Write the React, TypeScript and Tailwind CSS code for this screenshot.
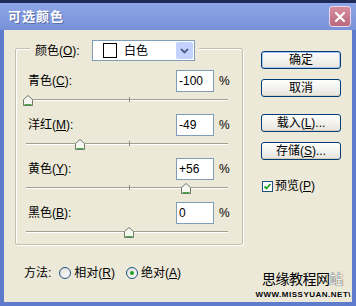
import { useState } from "react";

type Row = { label: string; key: string; value: string; thumb: number };

const rows: Row[] = [
  { label: "青色(", key: "C", value: "-100", thumb: 28 },
  { label: "洋红(", key: "M", value: "-49", thumb: 80 },
  { label: "黄色(", key: "Y", value: "+56", thumb: 186 },
  { label: "黑色(", key: "B", value: "0", thumb: 129 },
];

const font = "font-['Liberation_Sans','Noto_Sans_CJK_SC',sans-serif]";

function Thumb({ left }: { left: number }) {
  return (
    <svg
      width="10"
      height="11"
      viewBox="0 0 10 11"
      className="absolute top-[3px]"
      style={{ left: left - 5 }}
    >
      <polygon
        points="0.5,4.5 5,0.5 9.5,4.5 9.5,10.5 0.5,10.5"
        fill="#f7f7f2"
        stroke="#6f7a6c"
      />
      <line x1="1.5" y1="9.5" x2="8.5" y2="9.5" stroke="#3fae3f" />
    </svg>
  );
}

function Slider({ thumb }: { thumb: number }) {
  // track spans x 26..228 on the page; group content starts at x 16
  return (
    <div className="relative h-[22px]">
      <div className="absolute left-[10px] top-[7px] w-[202px] h-[1px] bg-[#a29f91]" />
      <div className="absolute left-[10px] top-[8px] w-[202px] h-[1px] bg-white" />
      <div className="absolute left-[113px] top-[5px] w-[1px] h-[5px] bg-[#8c897c]" />
      <Thumb left={thumb - 16} />
    </div>
  );
}

function XpButton({ children, main }: { children: React.ReactNode; main?: boolean }) {
  return (
    <button
      className={
        "w-[80px] h-[18px] rounded-[3px] border border-[#003c74] bg-gradient-to-b from-white to-[#e6e4dc] text-[12px] leading-none text-black flex items-center justify-center " +
        (main ? "shadow-[inset_0_0_0_1px_#a9c4f2]" : "shadow-[inset_0_-1px_0_#d6d0c0]")
      }
    >
      {children}
    </button>
  );
}

function Radio({ checked }: { checked?: boolean }) {
  return (
    <span className="w-[12px] h-[12px] rounded-full border border-[#1c5180] bg-gradient-to-br from-[#dcdcd6] to-white flex items-center justify-center">
      {checked && <span className="w-[4px] h-[4px] rounded-full bg-[#21a121]" />}
    </span>
  );
}

export default function App() {
  const [preview, setPreview] = useState(true);

  return (
    <div className={`relative w-[356px] h-[306px] flex flex-col overflow-hidden bg-[#5f7bcb] ${font}`}>
      <div className="h-[3px] bg-[#1f2b58]" />
      <div className="h-[27px] flex items-center justify-between pl-[8px] pr-[5px] bg-gradient-to-b from-[#8ea6e6] to-[#7891da]">
        <span className="text-[13px] font-bold text-white tracking-[1px] [text-shadow:1px_1px_0_#5a6fa8]">
          可选颜色
        </span>
        <span className="w-[22px] h-[21px] rounded-[3px] border border-[#e9d8e6] bg-gradient-to-b from-[#d88c9c] to-[#b86a82] flex items-center justify-center">
          <svg width="12" height="12" viewBox="0 0 12 12">
            <path d="M2 2 L10 10 M10 2 L2 10" stroke="white" strokeWidth="2.2" strokeLinecap="round" />
          </svg>
        </span>
      </div>

      <div className="flex-1 px-[4px] pb-[4px]">
        <div className="h-full bg-[#ece9d8] flex flex-col text-[12px] text-black">
          <div className="flex items-start pl-[11px] pt-[18px]">
            <div className="w-[228px] h-[197px] rounded-[2px] border border-[#c3c0b1] shadow-[inset_1px_1px_0_#fff,1px_1px_0_#fff]">
              <div className="flex items-center -mt-[9px] ml-[14px] pl-[5px] pr-[4px] w-fit bg-[#ece9d8]">
                <span className="w-[57px]">
                  颜色(<u>O</u>):
                </span>
                <div className="w-[103px] h-[21px] border border-[#7f9db9] bg-white flex items-center pl-[10px] pr-[1px]">
                  <span className="w-[14px] h-[15px] border border-black" />
                  <span className="ml-[7px] flex-1">白色</span>
                  <span className="w-[17px] h-[17px] rounded-[2px] bg-[#c3d3fd] flex items-center justify-center">
                    <svg width="9" height="6" viewBox="0 0 9 6">
                      <path d="M1 1 L4.5 4.5 L8 1" fill="none" stroke="#4d6185" strokeWidth="1.8" />
                    </svg>
                  </span>
                </div>
              </div>

              <div className="mt-[9px]">
                {rows.map((r) => (
                  <div key={r.key}>
                    <div className="flex items-center h-[22px] pl-[12px]">
                      <span className="w-[148px]">
                        {r.label}
                        <u>{r.key}</u>):
                      </span>
                      <div className="w-[38px] h-[22px] border border-[#7f9db9] bg-white flex items-center pl-[2px]">
                        {r.value}
                      </div>
                      <span className="ml-[5px]">%</span>
                    </div>
                    <Slider thumb={r.thumb} />
                  </div>
                ))}
              </div>
            </div>

            <div className="ml-[18px] mt-[3px] flex flex-col">
              <XpButton main>确定</XpButton>
              <div className="mt-[10px]">
                <XpButton>取消</XpButton>
              </div>
              <div className="mt-[17px]">
                <XpButton>
                  载入(<u>L</u>)...
                </XpButton>
              </div>
              <div className="mt-[10px]">
                <XpButton>
                  存储(<u>S</u>)...
                </XpButton>
              </div>
              <label className="mt-[17px] ml-[1px] flex items-center gap-[2px] cursor-pointer">
                <span
                  onClick={() => setPreview(!preview)}
                  className="w-[11px] h-[11px] border border-[#1c5180] bg-white flex items-center justify-center"
                >
                  {preview && (
                    <svg width="9" height="9" viewBox="0 0 9 9">
                      <path d="M1.5 4.5 L3.5 6.5 L7.5 2" fill="none" stroke="#21a121" strokeWidth="1.8" />
                    </svg>
                  )}
                </span>
                <span>
                  预览(<u>P</u>)
                </span>
              </label>
            </div>
          </div>

          <div className="flex items-center h-[14px] mt-[21px] pl-[20px]">
            <span className="mr-[8px]">方法:</span>
            <Radio />
            <span className="ml-[3px]">
              相对(<u>R</u>)
            </span>
            <span className="ml-[11px]">
              <Radio checked />
            </span>
            <span className="ml-[3px]">
              绝对(<u>A</u>)
            </span>
          </div>
        </div>
      </div>

      <div className="absolute left-[253px] top-[272px] w-[98px] flex flex-col items-end">
        <div className="text-[14px] leading-[15px] tracking-[-0.5px] text-black pr-[8px]">
          思缘教程网<span className="text-[#f4f4f4] [text-shadow:0_0_1px_#444,0_0_1px_#444]">站</span>
        </div>
        <div className="mt-[4px] text-[8px] leading-[8px] font-bold tracking-[0.5px] text-black [text-shadow:0_0_1px_#fff]">
          WWW.MISSYUAN.NET\
        </div>
      </div>
    </div>
  );
}
